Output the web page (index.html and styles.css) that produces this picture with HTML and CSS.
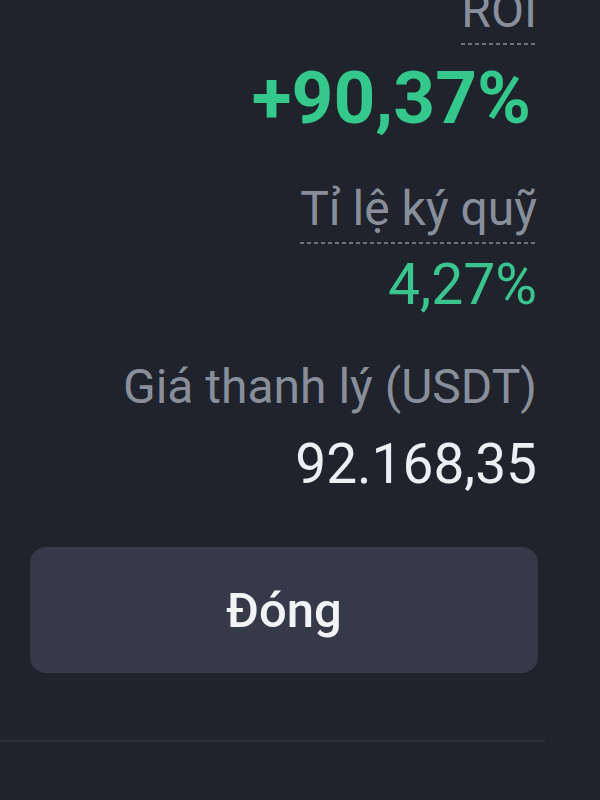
FILE: index.html
```html
<!DOCTYPE html>
<html lang="vi">
<head>
  <meta charset="UTF-8" />
  <meta name="viewport" content="width=device-width, initial-scale=1.0"/>
  <title>Chi tiết vị thế</title>
  <link rel="stylesheet" href="styles.css">
</head>
<body>
  <div class="sheet">
    <div class="stats">
      <span class="label dotted roi-label">ROI</span>
      <span class="value roi">+90,37%</span>

      <span class="label dotted margin-label">Tỉ lệ ký quỹ</span>
      <span class="value margin">4,27%</span>

      <span class="label liq-label">Giá thanh lý (USDT)</span>
      <span class="value liq">92.168,35</span>
    </div>

    <button type="button" class="close-btn">Đóng</button>

    <div class="bottom-line"></div>
  </div>
</body>
</html>
```

FILE: styles.css
```css
body {
  margin: 0;
  background: #1f232b;
  font-family: Roboto, "Noto Sans", sans-serif;
  overflow: hidden;
}

.sheet {
  height: 800px;
}

.stats {
  display: flex;
  flex-direction: column;
  align-items: flex-end;
  padding-right: 63px;
}

.label {
  font-size: 48px;
  line-height: 1;
  color: #888f9b;
}

.dotted {
  padding-bottom: 10px;
  background: repeating-linear-gradient(to right, #6b7280 0 4px, transparent 4px 7px) bottom / 100% 2px no-repeat;
}

.value {
  line-height: 1;
}

.roi-label {
  margin-top: -13px;
}

.roi {
  margin-top: 17px;
  margin-right: 6px;
  font-size: 73px;
  font-weight: 700;
  color: #35c88c;
}

.margin-label {
  margin-top: 50px;
  padding-bottom: 11px;
}

.margin {
  margin-top: 12px;
  font-size: 57px;
  color: #3cc48e;
}

.liq-label {
  margin-top: 50px;
}

.liq {
  margin-top: 26px;
  font-size: 55px;
  color: #eceef1;
}

.close-btn {
  display: block;
  margin: 55px 0 0 30px;
  width: 508px;
  height: 126px;
  border: none;
  border-radius: 16px;
  background: #343a47;
  color: #f2f3f5;
  font-family: Roboto, "Noto Sans", sans-serif;
  font-size: 49px;
  font-weight: 500;
}

.bottom-line {
  margin-top: 67px;
  width: 545px;
  height: 2px;
  background: #2a2f39;
}
```
